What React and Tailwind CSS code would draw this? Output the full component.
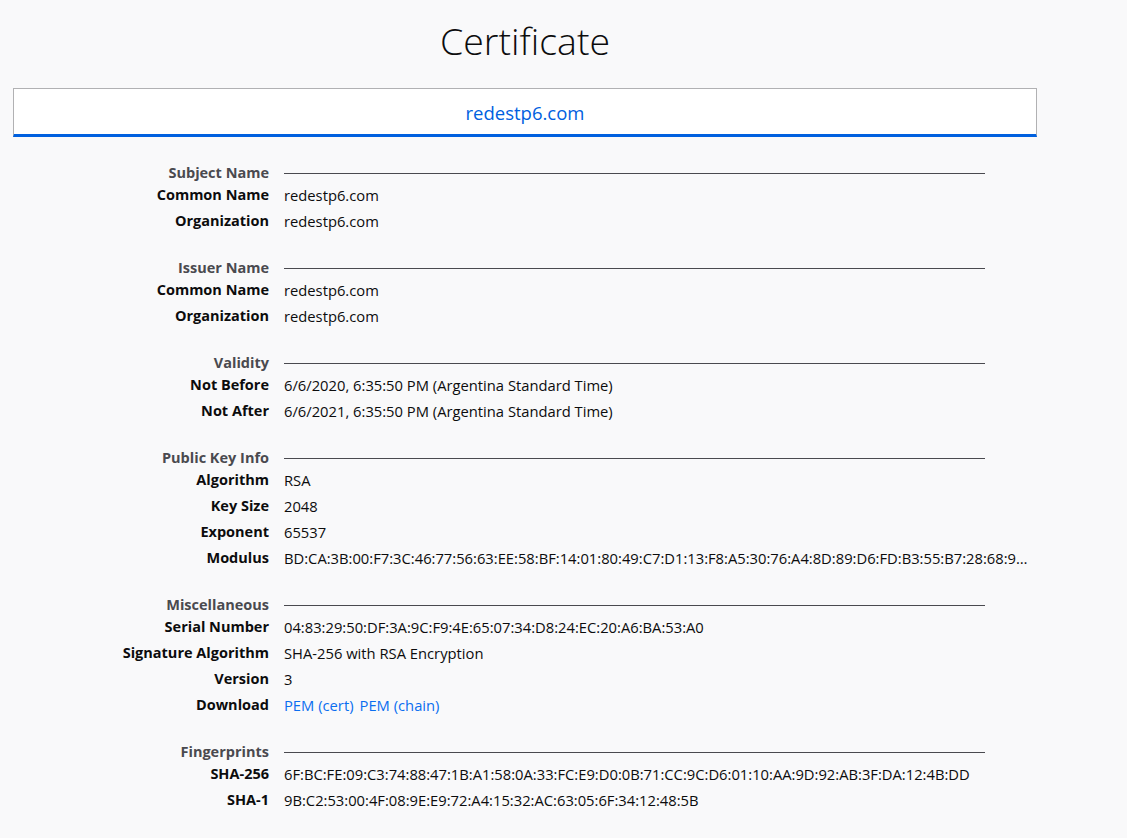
import React from "react";

const sections = [
  {
    title: "Subject Name",
    rows: [
      ["Common Name", "redestp6.com"],
      ["Organization", "redestp6.com"],
    ],
  },
  {
    title: "Issuer Name",
    rows: [
      ["Common Name", "redestp6.com"],
      ["Organization", "redestp6.com"],
    ],
  },
  {
    title: "Validity",
    rows: [
      ["Not Before", "6/6/2020, 6:35:50 PM (Argentina Standard Time)"],
      ["Not After", "6/6/2021, 6:35:50 PM (Argentina Standard Time)"],
    ],
  },
  {
    title: "Public Key Info",
    rows: [
      ["Algorithm", "RSA"],
      ["Key Size", "2048"],
      ["Exponent", "65537"],
      [
        "Modulus",
        "BD:CA:3B:00:F7:3C:46:77:56:63:EE:58:BF:14:01:80:49:C7:D1:13:F8:A5:30:76:A4:8D:89:D6:FD:B3:55:B7:28:68:9A:4F:12:33:C1:09:8E:77:AB:CD:EF:01:23:45",
      ],
    ],
  },
  {
    title: "Miscellaneous",
    rows: [
      ["Serial Number", "04:83:29:50:DF:3A:9C:F9:4E:65:07:34:D8:24:EC:20:A6:BA:53:A0"],
      ["Signature Algorithm", "SHA-256 with RSA Encryption"],
      ["Version", "3"],
      ["Download", "__links__"],
    ],
  },
  {
    title: "Fingerprints",
    rows: [
      [
        "SHA-256",
        "6F:BC:FE:09:C3:74:88:47:1B:A1:58:0A:33:FC:E9:D0:0B:71:CC:9C:D6:01:10:AA:9D:92:AB:3F:DA:12:4B:DD",
      ],
      ["SHA-1", "9B:C2:53:00:4F:08:9E:E9:72:A4:15:32:AC:63:05:6F:34:12:48:5B"],
    ],
  },
];

function Section({ title, rows }) {
  return (
    <div className="mb-[25px]">
      <div className="flex h-[18px] items-center">
        <div className="w-[256px] shrink-0 text-right text-[14.5px] font-bold leading-[18px] text-[#4a4a4f]">
          {title}
        </div>
        <div className="ml-[15px] h-px w-[701px] bg-[#4a4a4f]" />
      </div>
      {rows.map(([label, value], i) => (
        <div key={i} className="flex h-[26px] items-center">
          <div className="w-[256px] shrink-0 text-right text-[14.5px] font-bold leading-[20px] text-[#0c0c0d]">
            {label}
          </div>
          <div className="ml-[15px] w-[746px] overflow-hidden text-ellipsis whitespace-nowrap text-[14.75px] leading-[20px] text-[#0c0c0d]">
            {value === "__links__" ? (
              <span className="text-[#0a6ef0]">
                <span>PEM (cert)</span>
                <span className="ml-[6px]">PEM (chain)</span>
              </span>
            ) : (
              value
            )}
          </div>
        </div>
      ))}
    </div>
  );
}

export default function App() {
  return (
    <div
      className="min-h-[838px] w-full bg-[#f9f9fa]"
      style={{ fontFamily: '"Open Sans", "Noto Sans", sans-serif' }}
    >
      <div className="ml-[13px] w-[1024px]">
        <h1 className="pt-[19px] text-center text-[37.5px] font-light leading-[44px] text-[#0c0c0d]">
          Certificate
        </h1>
        <div className="mt-[25px] flex h-[49px] items-center justify-center border border-b-[3px] border-[#b1b1b3] border-b-[#0060df] bg-white pt-[3px] text-[18.5px] text-[#0060df]">
          redestp6.com
        </div>
        <div className="mt-[27px]">
          {sections.map((s, i) => (
            <Section key={i} {...s} />
          ))}
        </div>
      </div>
    </div>
  );
}
